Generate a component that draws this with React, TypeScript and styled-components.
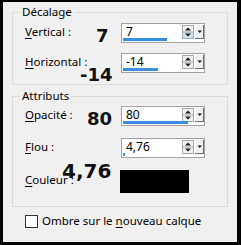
import styled, { createGlobalStyle } from "styled-components";

const GlobalStyle = createGlobalStyle`
  html, body {
    margin: 0;
    padding: 0;
    background: #000;
  }
  body {
    width: 241px;
    height: 245px;
    overflow: hidden;
    font-family: "Noto Sans", "Open Sans", sans-serif;
  }
`;

const Frame = styled.div`
  width: 241px;
  height: 245px;
  box-sizing: border-box;
  padding: 2px 4px 3px 3px;
  background: #000;
`;

const Dialog = styled.div`
  position: relative;
  width: 234px;
  height: 240px;
  box-sizing: border-box;
  padding: 2px 9px 0 9px;
  background: #f0f0f0;
  display: flex;
  flex-direction: column;
  color: #000;
  font-size: 11.5px;
`;

const Group = styled.fieldset<{ $top: number; $bottom: number; $gap: number }>`
  margin: 0;
  min-width: 0;
  padding: ${p => p.$top}px 12px ${p => p.$bottom}px 12px;
  border: 1px solid #dadada;
  display: flex;
  flex-direction: column;
  gap: ${p => p.$gap}px;
  & + & {
    margin-top: 3px;
  }
`;

const Legend = styled.legend`
  margin-left: -5px;
  padding: 0 2px;
  line-height: 16px;
  font-size: 11.5px;
`;

const Row = styled.div<{ $h?: number }>`
  display: grid;
  grid-template-columns: 96px 84px;
  align-items: center;
  height: ${p => p.$h ?? 20}px;
`;

const Label = styled.span`
  line-height: 16px;
  padding-bottom: 3px;
  white-space: nowrap;
`;

const Key = styled.span`
  text-decoration: underline;
  text-underline-offset: 2px;
`;

const SpinBox = styled.div`
  display: flex;
  flex-direction: column;
  width: 84px;
  height: 20px;
  box-sizing: border-box;
  border: 1px solid #a2a2a2;
  background: #fff;
  padding: 0 0 1px 1px;
`;

const SpinTop = styled.div`
  flex: none;
  display: flex;
  height: 14px;
`;

const FieldText = styled.span`
  flex: 1;
  min-width: 0;
  padding: 1px 0 0 3px;
  font-size: 12px;
  line-height: 14px;
`;

const Bar = styled.div`
  flex: none;
  height: 3px;
  background: #3a8ee0;
`;

const Arrows = styled.svg`
  flex: none;
  margin-top: 1px;
`;

const Swatch = styled.div`
  width: 69px;
  height: 23px;
  margin-left: -1px;
  background: #000;
`;

const CheckRow = styled.label`
  display: flex;
  align-items: center;
  gap: 4px;
  margin-top: 7px;
  padding-left: 13px;
  line-height: 14px;
`;

const Box = styled.span`
  width: 13px;
  height: 13px;
  box-sizing: border-box;
  border: 1px solid #333;
  background: #fff;
`;

const Note = styled.span<{ $size: number }>`
  position: absolute;
  font-family: "DejaVu Sans", Verdana, sans-serif;
  font-weight: bold;
  font-size: ${p => p.$size}px;
  line-height: ${p => p.$size}px;
  color: #111;
`;

type SpinProps = { value: string; bar: number; hot?: boolean };

const Spin = ({ value, bar, hot }: SpinProps) => (
  <SpinBox>
    <SpinTop>
      <FieldText>{value}</FieldText>
      <Arrows width="22" height="14" viewBox="0 0 22 14">
        <rect x="0.5" y="0.5" width="11" height="13" fill="#f0f0f0" stroke="#a8a8a8" />
        {hot && <rect x="1" y="7" width="10" height="6" fill="#cde5f7" />}
        <line x1="1" y1="7" x2="11" y2="7" stroke="#a8a8a8" />
        <polygon points="3,5.5 9,5.5 6,2.5" fill="#1a1a1a" />
        <polygon points="3,8.5 9,8.5 6,11.5" fill="#1a1a1a" />
        <rect x="13" y="0" width="9" height="14" fill="#f0f0f0" />
        <line x1="13.5" y1="0" x2="13.5" y2="14" stroke="#fff" />
        <line x1="21.5" y1="0" x2="21.5" y2="14" stroke="#6d6d6d" />
        <line x1="13" y1="13.5" x2="22" y2="13.5" stroke="#6d6d6d" />
        <polygon points="15.5,5.5 20,5.5 17.75,8" fill="#1a1a1a" />
      </Arrows>
    </SpinTop>
    <Bar style={{ width: bar }} />
  </SpinBox>
);

export default function App() {
  return (
    <>
      <GlobalStyle />
      <Frame>
        <Dialog>
          <Group $top={3} $bottom={11} $gap={10}>
            <Legend>Décalage</Legend>
            <Row>
              <Label><Key>V</Key>ertical :</Label>
              <Spin value="7" bar={44} hot />
            </Row>
            <Row>
              <Label><Key>H</Key>orizontal :</Label>
              <Spin value="-14" bar={35} />
            </Row>
          </Group>
          <Group $top={2} $bottom={13} $gap={12}>
            <Legend>Attributs</Legend>
            <Row>
              <Label><Key>O</Key>pacité :</Label>
              <Spin value="80" bar={65} />
            </Row>
            <Row>
              <Label><Key>F</Key>lou :</Label>
              <Spin value="4,76" bar={2} />
            </Row>
            <Row $h={23}>
              <Label><Key>C</Key>ouleur :</Label>
              <Swatch />
            </Row>
          </Group>
          <CheckRow>
            <Box />
            <span>Ombre sur le <Key>n</Key>ouveau calque</span>
          </CheckRow>
          <Note $size={18} style={{ left: 93, top: 25 }}>7</Note>
          <Note $size={18} style={{ left: 77, top: 64 }}>-14</Note>
          <Note $size={18} style={{ left: 84, top: 108 }}>80</Note>
          <Note $size={20} style={{ left: 59, top: 159 }}>4,76</Note>
        </Dialog>
      </Frame>
    </>
  );
}
